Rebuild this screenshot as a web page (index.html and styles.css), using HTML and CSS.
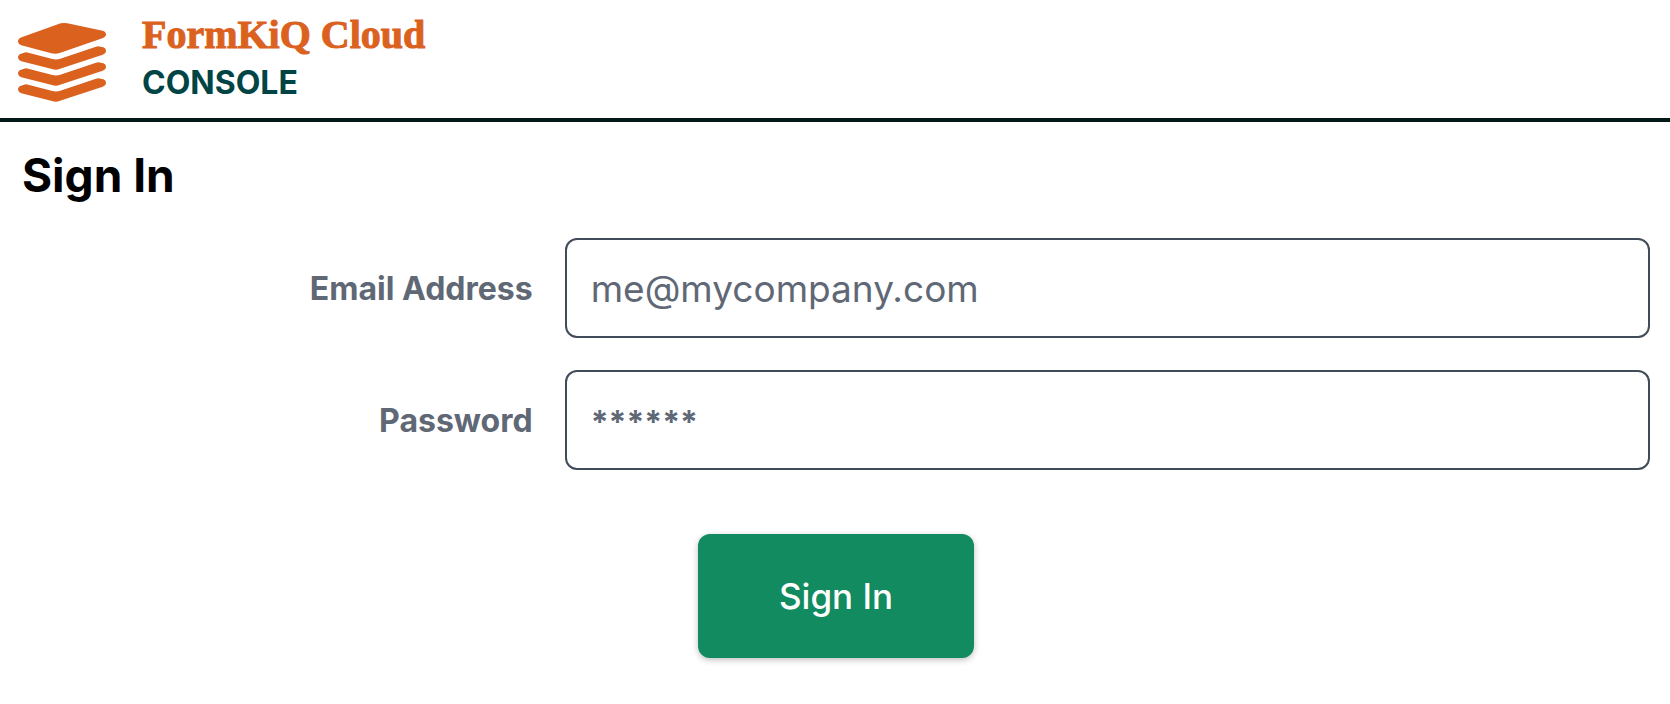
FILE: index.html
```html
<!DOCTYPE html>
<html lang="en">
<head>
<meta charset="utf-8">
<meta name="viewport" content="width=device-width, initial-scale=1">
<title>FormKiQ Cloud Console</title>
<link rel="stylesheet" href="styles.css">
</head>
<body>
<header class="header">
  <svg class="logo" viewBox="0 0 264 236" aria-hidden="true">
    <path d="M128 1Q138-1 148 1L254 23Q264 26 264 34Q264 42 253 46L125 90Q113 94 100 91L10 67Q0 63 0 55Q0 47 11 43Z"/>
    <path id="layer" d="M9 92L18 89Q24 87 31 89L103 108Q115 111 127 107L234 71Q241 69 248 71L256 73Q264 76 264 83Q264 91 254 95L124 138Q113 142 102 138L10 115Q0 111 0 103Q0 95 9 92Z"/>
    <use href="#layer" y="48"/>
    <use href="#layer" y="96"/>
  </svg>
  <div class="brand">
    <span class="brand-name">FormKiQ Cloud</span>
    <span class="brand-section">CONSOLE</span>
  </div>
</header>
<main class="main">
  <h1 class="title">Sign In</h1>
  <form class="form">
    <div class="field">
      <label class="label" for="email">Email Address</label>
      <input class="input" id="email" type="email" placeholder="me@mycompany.com">
    </div>
    <div class="field">
      <label class="label" for="password">Password</label>
      <input class="input" id="password" type="password" placeholder="******">
    </div>
    <button class="submit" type="submit">Sign In</button>
  </form>
</main>
</body>
</html>
```
FILE: styles.css
```css
* {
  box-sizing: border-box;
}

body {
  margin: 0;
  background: #fff;
  color: #000;
  font-family: Inter, "Liberation Sans", sans-serif;
}

.header {
  display: flex;
  align-items: flex-start;
  gap: 36px;
  padding: 11px 18px;
  border-bottom: 4px solid #001a17;
}

.logo {
  width: 88px;
  margin-top: 12px;
  fill: #db611f;
  overflow: visible;
}

.brand {
  display: flex;
  flex-direction: column;
}

.brand-name {
  color: #db611f;
  font: bold 40px/48px "Liberation Serif", serif;
  -webkit-text-stroke: 1px #db611f;
}

.brand-section {
  color: #004445;
  font-size: 32px;
  font-weight: 700;
  line-height: 48px;
}

.main {
  padding: 23px 20px 44px 22px;
}

.title {
  margin: 0 0 33px;
  font-size: 46px;
  font-weight: 700;
  line-height: 60px;
}

.form {
  display: flex;
  flex-direction: column;
  gap: 32px;
}

.field {
  display: grid;
  grid-template-columns: 1fr 2fr;
  align-items: center;
}

.label {
  padding: 2px 32px 0 0;
  color: #606876;
  font-size: 32px;
  font-weight: 700;
  line-height: 48px;
  text-align: right;
}

.input {
  width: 100%;
  padding: 25px 24px 23px;
  border: 2px solid #414b59;
  border-radius: 12px;
  background: #fff;
  color: #414b59;
  font: 37px/48px Inter, "Liberation Sans", sans-serif;
}

.input::placeholder {
  color: #606876;
  opacity: 1;
}

.input[type="password"]::placeholder {
  font-size: 32px;
  font-weight: 700;
}

.submit {
  align-self: center;
  margin-top: 32px;
  padding: 36px 81px;
  border: 0;
  border-radius: 12px;
  background: #128b60;
  box-shadow: 0 2px 6px rgb(0 0 0 / 25%);
  color: #fff;
  font: 500 35px/52px Inter, "Liberation Sans", sans-serif;
}
```
